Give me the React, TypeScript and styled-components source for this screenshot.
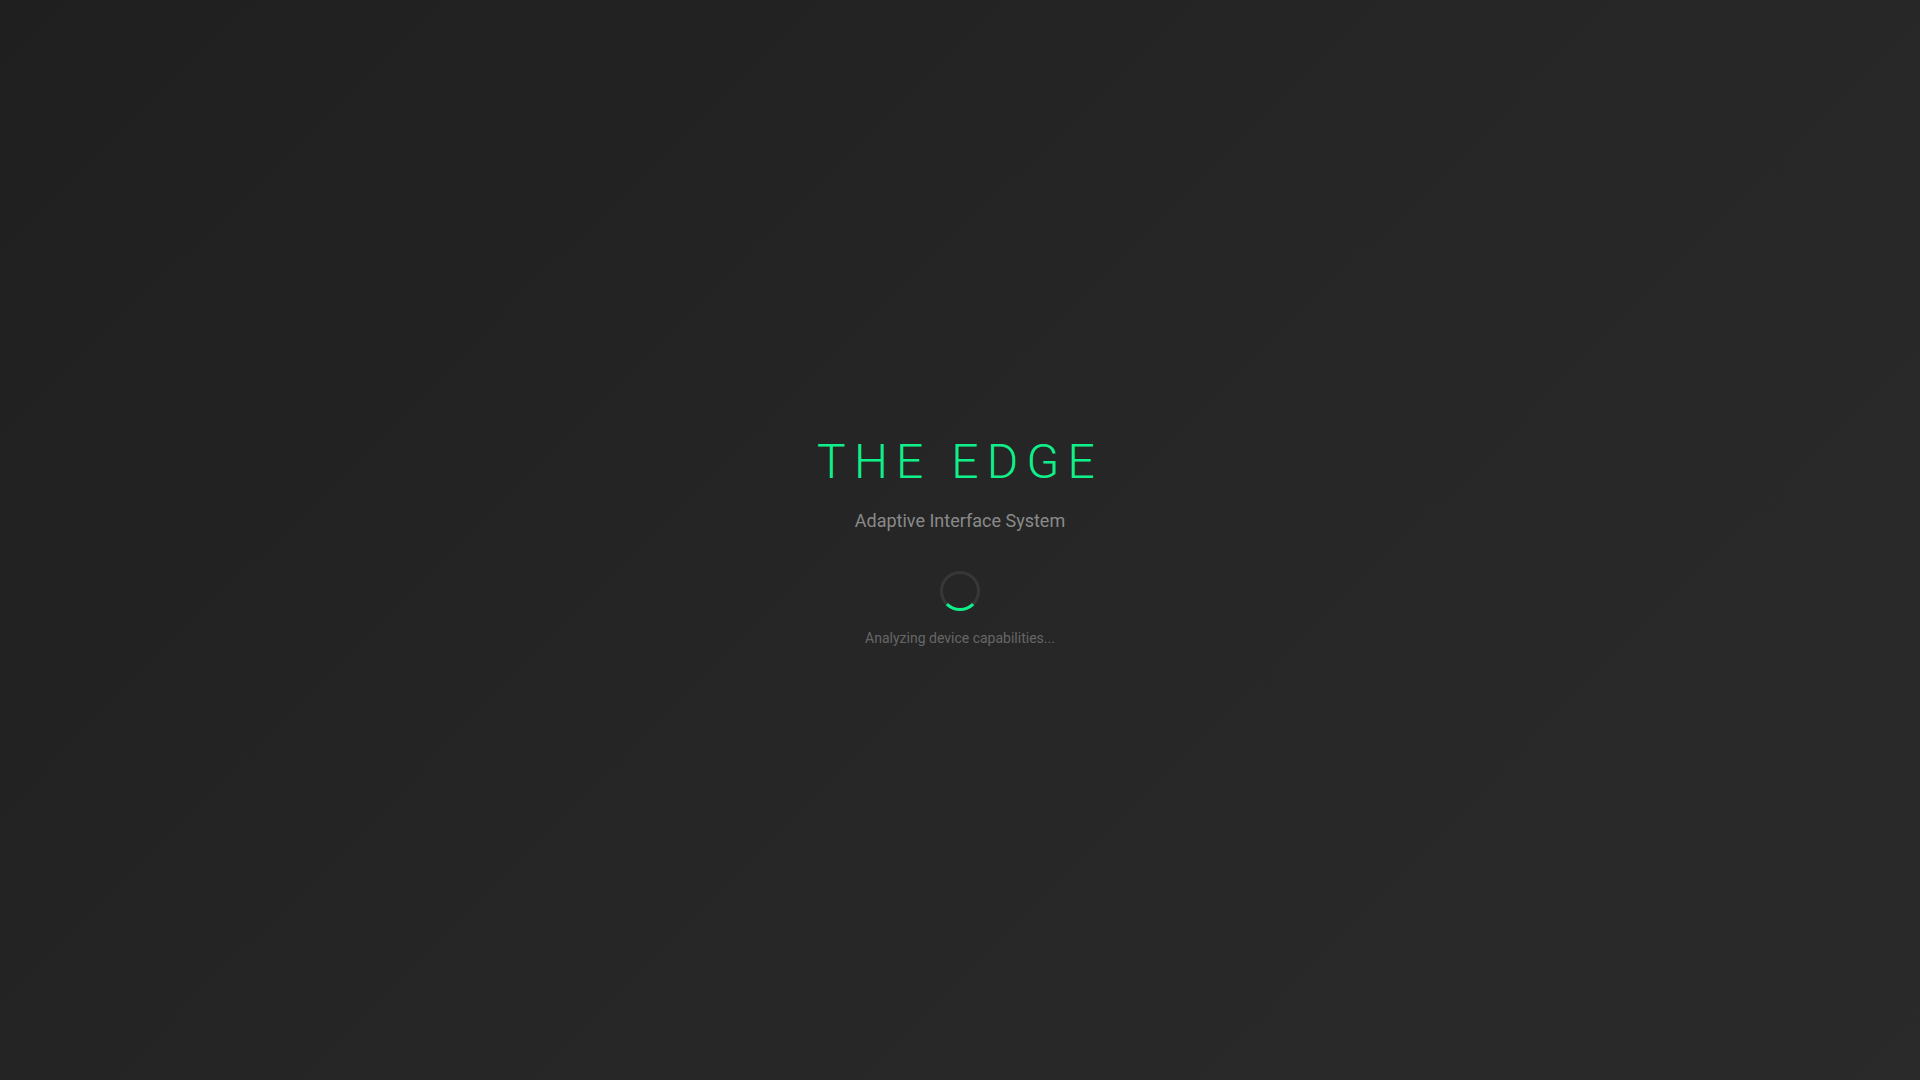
import React from "react";
import styled, { createGlobalStyle } from "styled-components";

const GlobalStyle = createGlobalStyle`
  html, body {
    margin: 0;
    padding: 0;
    background: #222;
  }

  * {
    box-sizing: border-box;
  }
`;

const Screen = styled.div`
  min-height: 100vh;
  padding-top: 2px;
  display: flex;
  align-items: center;
  justify-content: center;
  background: linear-gradient(135deg, #1f1f1f 0%, #262626 50%, #2a2a2a 100%);
  font-family: Roboto, "Liberation Sans", sans-serif;
`;

const Loader = styled.div`
  display: flex;
  flex-direction: column;
  align-items: center;
  text-align: center;
`;

const Title = styled.h1`
  margin: 0 0 17px;
  font-size: 48px;
  line-height: 1.2;
  font-weight: 300;
  letter-spacing: 0.17em;
  color: #0ff08a;
`;

const Subtitle = styled.p`
  margin: 0 0 37px;
  font-size: 18px;
  line-height: 1.5;
  color: #8a8a8a;
`;

const Spinner = styled.div`
  width: 40px;
  height: 40px;
  margin-bottom: 17px;
  border-radius: 50%;
  border: 3px solid rgba(255, 255, 255, 0.08);
  border-bottom-color: #0ff08a;
`;

const Status = styled.p`
  margin: 0;
  font-size: 14px;
  line-height: 1.5;
  color: #666;
`;

export default function App() {
  return (
    <>
      <GlobalStyle />
      <Screen>
        <Loader>
          <Title>THE EDGE</Title>
          <Subtitle>Adaptive Interface System</Subtitle>
          <Spinner />
          <Status>Analyzing device capabilities...</Status>
        </Loader>
      </Screen>
    </>
  );
}
